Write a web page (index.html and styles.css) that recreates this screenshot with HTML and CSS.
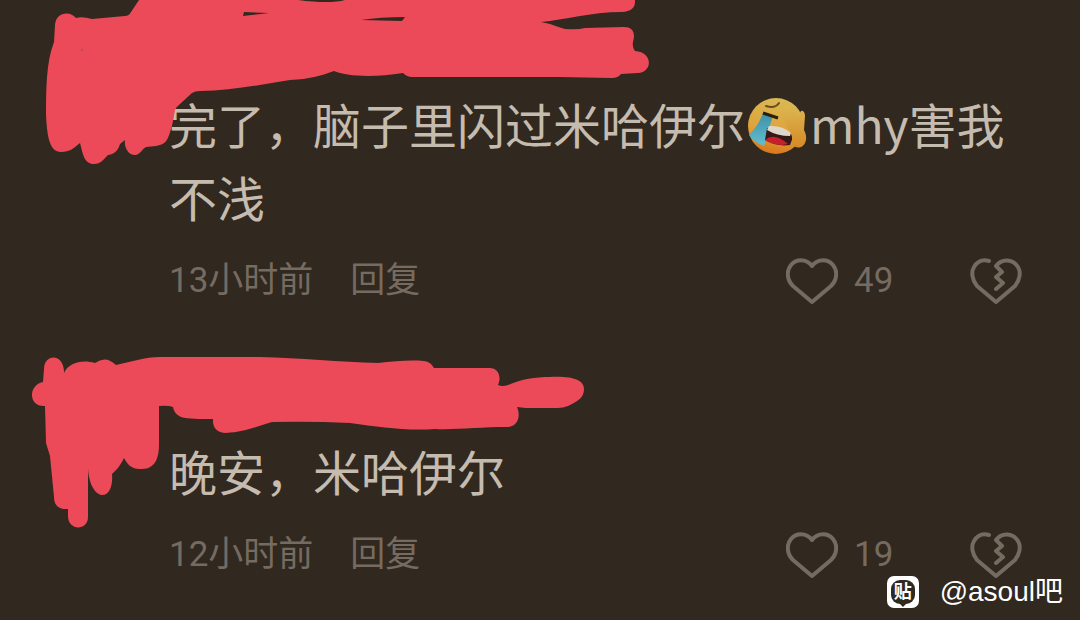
FILE: index.html
```
<!DOCTYPE html>
<html lang="zh-CN">
<head>
    <meta charset="UTF-8">
    <meta name="viewport" content="width=device-width, initial-scale=1.0">
    <title>评论</title>
    <link rel="stylesheet" href="styles.css">
</head>
<body>
    <main class="comments">
        <!-- First comment -->
        <article class="comment">
            <svg class="scribble" width="660" height="170" viewBox="0 0 660 170" aria-hidden="true">
                <path fill-rule="evenodd" d="M139 0L131 12Q129 16 125 16L92 19Q82 16 76 18C71 11 56 11 55 25L54 42C46 62 46 92 46 114C47 138 50 152 61 152C70 152 74 148 80 143C83 154 84 164 94 164C101 164 104 159 108 155C116 154 119 148 120 144L125 140C124 147 128 155 135 155C140 155 142 149 146 147L156 146C168 144 168 138 172 126L175 110Q176 107 180 104L192 93Q195 91 200 91C230 91 258 85 290 80C310 79 320 76 334 71C345 76 372 78 403 73Q407 77 412 77L560 77L612 78Q618 78 621 74L638 73C653 72 653 52 635 51Q632 47 633 42C636 32 632 27 624 27L585 28Q578 30 565 29Q558 27 550 24L541 22C565 20 590 12 622 12Q636 11 635 0L345 0Q330 4 298 0ZM244 12L269 13L243 16ZM361 20Q380 17 405 17L402 21Z"/>
                <circle class="speck" cx="82" cy="50" r="1"/>
            </svg>
            <p class="text">完了，脑子里闪过米哈伊尔<svg class="emoji" viewBox="0 0 60 60" role="img" aria-label="笑哭">
                    <defs>
                        <linearGradient id="face" x1="0.6" y1="0" x2="0.4" y2="1">
                            <stop offset="0" stop-color="#d9b955"/>
                            <stop offset="0.6" stop-color="#dfa23a"/>
                            <stop offset="1" stop-color="#d9761a"/>
                        </linearGradient>
                        <linearGradient id="hand" x1="0" y1="0" x2="0" y2="1">
                            <stop offset="0" stop-color="#dcb551"/>
                            <stop offset="1" stop-color="#d58a26"/>
                        </linearGradient>
                        <linearGradient id="tear" x1="0" y1="0" x2="0" y2="1">
                            <stop offset="0" stop-color="#3e8fa9"/>
                            <stop offset="1" stop-color="#62bfd0"/>
                        </linearGradient>
                    </defs>
                    <circle cx="29" cy="30" r="28" fill="url(#face)"/>
                    <path d="M16 17L26 20C22 31 20 40 17 50Q8 47 2 39C9 32 13 25 16 17Z" fill="url(#tear)"/>
                    <path d="M16 17L31 22" stroke="#28200f" stroke-width="3"/>
                    <path d="M19 10Q28 13 32 7" fill="none" stroke="#66501f" stroke-width="2" stroke-linecap="round"/>
                    <path d="M20 32Q33 38 46 37Q46 43 43 49Q30 51 18 44Z" fill="#351817"/>
                    <path d="M22 30Q35 29 44 37L43 40Q30 40 20 34Z" fill="#ddd7cb"/>
                    <path d="M18 44Q27 36 41 48Q29 51 18 44Z" fill="#c5202b"/>
                    <path d="M37 13C41 8 47 12 52 20L53 17C54 13 58 15 58 20L57 34C61 41 59 49 54 51Q48 53 45 47C47 33 35 30 36 18Z" fill="url(#hand)"/>
                </svg>mhy害我不浅</p>
            <div class="meta">
                <time class="time">13小时前</time>
                <button class="reply" type="button">回复</button>
                <button class="like" type="button" aria-label="赞 49">
                    <svg class="heart" viewBox="0 0 52 46"><path d="M26 8C20 0 10 1 5 7C0 13 1 22 7 28L26 44L45 28C51 22 52 13 47 7C42 1 32 0 26 8Z"/></svg>
                    <span>49</span>
                </button>
                <button class="dislike" type="button" aria-label="踩">
                    <svg class="heart" viewBox="0 0 52 46"><path d="M19 3C12 1 7 4 4 9C1 14 2 22 7 28L26 44L45 28C50 22 51 14 48 9C43 1 32 0 26 8L32 14L26 19L33 25L26 31"/></svg>
                </button>
            </div>
        </article>

        <!-- Second comment -->
        <article class="comment">
            <svg class="scribble" width="600" height="190" viewBox="0 0 600 190" aria-hidden="true">
                <path d="M44 22C44 7 63 6 64 24V26C68 16 82 12 95 16Q106 8 116 18C130 15 145 10 160 10H260C300 11 340 15 378 16C395 14 410 13 424 14Q431 15 434 21H488C498 20 502 29 498 38Q502 40 508 38C522 32 535 30 550 30C575 29 584 34 584 42C584 51 578 54 568 59Q563 61 558 61H526L517 60C521 69 518 80 507 80C480 80 455 83 435 82C405 84 380 80 350 76Q310 74 272 75C258 79 245 85 226 86Q212 85 213 72C200 72 188 72 181 70Q174 67 173 60Q168 58 159 59V98C159 111 155 122 142 122C132 123 127 117 124 111Q120 120 112 127C113 138 110 148 102 148C93 147 88 132 88 120V170C88 184 68 184 68 169V162Q54 163 54 150L50 109L46 96L45 59C28 60 28 38 43 35Z"/>
            </svg>
            <p class="text">晚安，米哈伊尔</p>
            <div class="meta">
                <time class="time">12小时前</time>
                <button class="reply" type="button">回复</button>
                <button class="like" type="button" aria-label="赞 19">
                    <svg class="heart" viewBox="0 0 52 46"><path d="M26 8C20 0 10 1 5 7C0 13 1 22 7 28L26 44L45 28C51 22 52 13 47 7C42 1 32 0 26 8Z"/></svg>
                    <span>19</span>
                </button>
                <button class="dislike" type="button" aria-label="踩">
                    <svg class="heart" viewBox="0 0 52 46"><path d="M19 3C12 1 7 4 4 9C1 14 2 22 7 28L26 44L45 28C50 22 51 14 48 9C43 1 32 0 26 8L32 14L26 19L33 25L26 31"/></svg>
                </button>
            </div>
        </article>
    </main>

    <!-- Watermark -->
    <div class="watermark">
        <span class="badge"><span class="bubble">贴</span></span>
        <span>@asoul吧</span>
    </div>
</body>
</html>
```
FILE: styles.css
```
* {
    box-sizing: border-box;
}

body {
    margin: 0;
    min-height: 100vh;
    position: relative;
    background: #31281f;
    color: #c5bbaf;
    font-family: "Noto Sans CJK SC", sans-serif;
}

.comments {
    display: flex;
    flex-direction: column;
    gap: 43px;
}

.comment {
    position: relative;
    padding: 87px 58px 0 169px;
}

/* Marker strokes drawn over the avatar and the name */
.scribble {
    position: absolute;
    top: 0;
    left: 0;
    fill: #ec4a58;
    pointer-events: none;
}

.speck {
    fill: #8c5a66;
}

.text {
    margin: 0;
    font-size: 48px;
    line-height: 73px;
}

.emoji {
    width: 60px;
    height: 60px;
    margin: -10px 3px 0 2px;
    vertical-align: middle;
}

.meta {
    display: flex;
    align-items: center;
    height: 46px;
    margin-top: 25px;
    color: #756b61;
    font-family: Roboto, "Noto Sans CJK SC", sans-serif;
    font-size: 35px;
    line-height: 46px;
}

.meta button {
    padding: 0;
    border: none;
    background: none;
    color: inherit;
    font: inherit;
    cursor: pointer;
}

.meta .reply {
    margin-left: 37px;
}

.meta .like {
    display: flex;
    align-items: center;
    gap: 16px;
    width: 184px;
    margin-left: auto;
}

.meta .dislike {
    display: flex;
}

.heart {
    width: 52px;
    height: 46px;
    fill: none;
    stroke: currentColor;
    stroke-width: 4;
    stroke-linecap: round;
    stroke-linejoin: round;
}

.watermark {
    position: absolute;
    right: 17px;
    bottom: 12px;
    display: flex;
    align-items: center;
    gap: 21px;
    color: #fff;
    font-family: "Liberation Sans", "Noto Sans CJK SC", sans-serif;
    font-size: 28px;
    line-height: 32px;
}

.badge {
    display: flex;
    align-items: center;
    justify-content: center;
    width: 32px;
    height: 32px;
    border-radius: 7px;
    background: #fff;
}

.bubble {
    position: relative;
    width: 24px;
    height: 24px;
    border-radius: 9px;
    background: #31281f;
    font-size: 18px;
    font-weight: bold;
    line-height: 24px;
    text-align: center;
}

/* Tail of the speech bubble */
.bubble::after {
    content: "";
    position: absolute;
    left: 9px;
    top: 24px;
    border: 3px solid transparent;
    border-top-color: #31281f;
    border-bottom: none;
}
```
